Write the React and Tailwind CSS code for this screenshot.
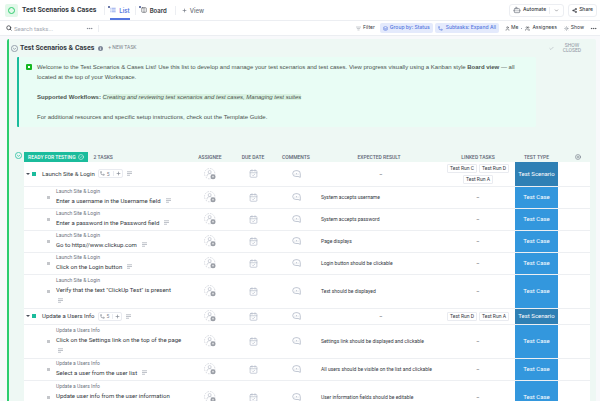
import {
  CalendarCheck,
  Check,
  ChevronDown,
  CircleCheck,
  CirclePlus,
  Columns2,
  Ellipsis,
  ListFilter,
  List,
  Bot,
  Layers,
  Plus,
  Search,
  Share2,
  Sun,
  User,
  Users,
} from "lucide-react";

const scenarios = [
  {
    name: "Launch Site & Login",
    links: ["Test Run C", "Test Run D", "Test Run A"],
    height: "h-6",
    cases: [
      { name: "Enter a username in the Username field", result: "System accepts username" },
      { name: "Enter a password in the Password field", result: "System accepts password" },
      { name: "Go to https//www.clickup.com", result: "Page displays" },
      { name: "Click on the Login button", result: "Login button should be clickable" },
      { name: 'Verify that the text "ClickUp Test" is present', result: "Text should be displayed", tall: true },
    ],
  },
  {
    name: "Update a Users Info",
    links: ["Test Run D", "Test Run A"],
    height: "h-4",
    cases: [
      {
        name: "Click on the Settings link on the top of the page",
        result: "Settings link should be displayed and clickable",
        tall: true,
      },
      { name: "Select a user from the user list", result: "All users should be visible on the list and clickable" },
      {
        name: "Update user info from the user information",
        result: "User information fields should be editable",
        tall: true,
      },
    ],
  },
];

const SubtaskIcon = ({ className }) => (
  <svg viewBox="0 0 12 12" className={className} fill="none" stroke="currentColor" strokeWidth="1.5">
    <circle cx="2.5" cy="2.5" r="1.2" />
    <path d="M2.5 3.7V6a3 3 0 0 0 3 3h2" />
    <circle cx="9" cy="9" r="1.4" />
  </svg>
);

const NoteIcon = () => (
  <svg viewBox="0 0 10 10" className="size-[5px] shrink-0 text-[#a3a9b3]" stroke="currentColor" strokeWidth="1.4">
    <path d="M0 1.5h10M0 5h10M0 8.5h6" />
  </svg>
);

const InfoIcon = () => (
  <svg viewBox="0 0 12 12" className="ml-1 size-[5px]">
    <circle cx="6" cy="6" r="6" fill="#7d8798" />
    <path d="M6 5v4.500M6 2.200v1.600" stroke="#fff" strokeWidth="1.6" />
  </svg>
);

const CommentIcon = () => (
  <svg viewBox="0 0 20 18" className="mx-auto h-2 w-[9px] text-[#b0b8c6]" fill="none" stroke="currentColor" strokeWidth="1.8">
    <path d="M18.500 16.500V8.500A7 6.500 0 0 0 11.500 1.500H8.500A7 6.500 0 0 0 8.500 14.500H13.500z" strokeLinejoin="round" />
    <path d="M6.500 10V8.500M10 10V7M13.500 10V8.500" />
  </svg>
);

const AssigneeIcon = () => (
  <svg viewBox="0 0 36 36" className="mx-auto size-3" fill="none">
    <circle cx="17" cy="17" r="15.500" stroke="#c0c5ce" strokeWidth="1.8" strokeDasharray="5 3" />
    <circle cx="17" cy="12" r="4.500" stroke="#b9bec8" strokeWidth="2" />
    <path d="M9 25c0-5 3-8 8-8s6 1 7 4" stroke="#b9bec8" strokeWidth="2" />
    <circle cx="27" cy="26" r="7.500" fill="#9a9ea6" />
    <path d="M27 23v6M24 26h6" stroke="#fff" strokeWidth="1.5" />
  </svg>
);

const CollapseButton = ({ label, className }) => (
  <button aria-label={label} className={className}>
    <svg viewBox="0 0 14 14" className="size-[7px]" fill="none" stroke="currentColor" strokeWidth="1.5">
      <circle cx="7" cy="7" r="6.200" />
      <path d="M4.300 6 7 8.700 9.700 6" />
    </svg>
  </button>
);

const PinnedMark = () => <span className="absolute -left-[2px] -top-px size-[2px] rounded-full bg-[#3d4f8f]" />;

const RowCells = ({ result, links, scenario }) => (
  <>
    <td>
      <AssigneeIcon />
    </td>
    <td>
      <CalendarCheck className="mx-auto size-[9px] text-[#b0b8c6]" strokeWidth={1.8} />
    </td>
    <td>
      <CommentIcon />
    </td>
    <td className="whitespace-nowrap pl-1 text-[5px] leading-[8px]">
      {result || <p className="text-center">–</p>}
    </td>
    <td className="text-center text-[5px] leading-[8px]">
      {links ? (
        <div className="flex flex-wrap justify-center gap-[2px]">
          {links.map((link) => (
            <a key={link} href="#" className="rounded-[1px] border border-[#e9ebf0] px-[2px] text-[5px] leading-[7px]">
              {link}
            </a>
          ))}
        </div>
      ) : (
        "–"
      )}
    </td>
    <td className={scenario ? "bg-[#2f80b5] text-center text-white" : "bg-[#3397dd] text-center text-white"}>
      {scenario ? "Test Scenario" : "Test Case"}
    </td>
    <td></td>
  </>
);

const ScenarioRow = ({ item }) => (
  <tr className={`${item.height} border-b border-[#edeff2]`}>
    <td>
      <div className="flex items-center whitespace-nowrap pl-[2px]">
        <button aria-label="Collapse" className="h-0 w-0 border-x-2 border-t-2 border-x-transparent border-t-[#4a505a]" />
        <span className="ml-[2px] size-1 bg-[#1bbc9c]" />
        <span className="ml-[6px]">{item.name}</span>
        <span className="ml-[3px] flex h-[9px] items-center gap-[2px] rounded-[2px] border border-[#e9ebf0] px-px text-[5px] text-[#7c828d]">
          <SubtaskIcon className="size-[5px]" />
          5
          <span className="ml-px h-[5px] w-px bg-[#e9ebf0]" />
          <button aria-label="Add subtask">
            <Plus className="size-[5px]" strokeWidth={3} />
          </button>
        </span>
        <span className="ml-1">
          <NoteIcon />
        </span>
      </div>
    </td>
    <RowCells links={item.links} scenario />
  </tr>
);

const CaseRow = ({ item, parent }) => (
  <tr className={item.tall ? "h-[34px] border-b border-[#edeff2]" : "h-[22px] border-b border-[#edeff2]"}>
    <td>
      <div className="flex items-center pl-[23px]">
        <span className="size-[3px] shrink-0 bg-[#c4c6ca]" />
        <div className="ml-[6px]">
          <p className="text-[5px] leading-[7px] text-[#6c727d]">{parent}</p>
          <div className={item.tall ? "leading-[11px]" : "flex items-center gap-[5px] leading-[11px]"}>
            <p>{item.name}</p>
            <div className={item.tall ? "flex h-[11px] items-center pl-[2px]" : "flex"}>
              <NoteIcon />
            </div>
          </div>
        </div>
      </div>
    </td>
    <RowCells result={item.result} />
  </tr>
);

const TopNav = () => (
  <header className="flex h-[21px] shrink-0 items-center border-b border-[#eceef2] pl-[5px] pr-[3px]">
    <span className="flex size-[13px] items-center justify-center rounded-[2px] bg-[#e3f8ea]">
      <span className="size-[7px] rounded-full border border-[#2ecd6f]" />
    </span>
    <h1 className="ml-1 text-[7px] font-bold">Test Scenarios & Cases</h1>
    <nav className="ml-2 flex h-full items-center font-['Inter',sans-serif] text-[6px] font-medium">
      <span className="h-[9px] w-px bg-[#eceef2]" />
      <a href="#" className="ml-[5px] flex h-full items-center gap-[3px] border-b-2 border-[#5577e0] pt-[2px] font-semibold text-[#5577e0]">
        <span className="relative">
          <List className="size-[6px]" strokeWidth={2.5} />
          <PinnedMark />
        </span>
        List
      </a>
      <span className="ml-[5px] h-[9px] w-px bg-[#eceef2]" />
      <a href="#" className="ml-[5px] flex items-center gap-[3px] font-semibold">
        <span className="relative">
          <Columns2 className="size-[6px]" strokeWidth={2} />
          <PinnedMark />
        </span>
        Board
      </a>
      <span className="ml-2 h-[9px] w-px bg-[#eceef2]" />
      <button className="ml-[6px] flex items-center gap-[3px] text-[#6c727d]">
        <Plus className="size-[5px]" strokeWidth={3} />
        View
      </button>
    </nav>
    <div className="ml-auto flex gap-1 font-['Inter',sans-serif] text-[5px] font-medium">
      <div className="flex h-[13px] items-center rounded-[3px] border border-[#eceef2] pl-[3px]">
        <button className="flex items-center gap-[2px]">
          <Bot className="size-[8px] text-[#6c727d]" />
          Automate
        </button>
        <span className="ml-[3px] h-[7px] w-px bg-[#eceef2]" />
        <button aria-label="Automate options" className="px-1">
          <ChevronDown className="size-[5px]" />
        </button>
      </div>
      <button className="flex h-[13px] items-center gap-[2px] rounded-[3px] border border-[#eceef2] px-[3px]">
        <Share2 className="size-[5px]" strokeWidth={3} />
        Share
      </button>
    </div>
  </header>
);

const Toolbar = () => (
  <div className="flex h-[15px] shrink-0 items-center border-b border-[#eceef2] pl-[6px] pr-[3px] font-['Inter',sans-serif] text-[5px]">
    <Search className="size-[6px]" strokeWidth={3} />
    <input
      type="search"
      aria-label="Search tasks"
      placeholder="Search tasks..."
      className="ml-[2px] w-[72px] font-['Roboto',sans-serif] text-[6px] outline-none placeholder:text-[#a3a9b3]"
    />
    <button aria-label="Search options">
      <Ellipsis className="size-[7px] text-[#6c727d]" />
    </button>
    <span className="ml-[5px] h-[7px] w-px bg-[#eceef2]" />
    <div className="ml-auto flex items-center whitespace-nowrap">
      <button className="flex items-center gap-[2px]">
        <ListFilter className="size-[5px] text-[#7c828d]" />
        Filter
      </button>
      <button className="ml-[5px] flex h-[10px] items-center gap-[2px] rounded-[2px] bg-[#e4eafc] px-[3px] font-medium text-[#5577e0]">
        <Layers className="size-[5px]" strokeWidth={2.5} />
        Group by: Status
      </button>
      <button className="ml-[2px] flex h-[10px] items-center gap-[3px] rounded-[2px] bg-[#e4eafc] px-[3px] font-medium text-[#5577e0]">
        <SubtaskIcon className="size-[5px]" />
        Subtasks: Expand All
      </button>
      <button className="ml-[6px] flex items-center gap-px">
        <User className="size-[5px]" />
        Me
      </button>
      <span className="mx-[3px] size-px bg-[#a3a9b3]" />
      <button className="flex items-center gap-[2px]">
        <Users className="size-[5px]" />
        Assignees
      </button>
      <button className="ml-[7px] flex items-center gap-[2px]">
        <Sun className="size-[5px] text-[#7c828d]" />
        Show
      </button>
      <button aria-label="More" className="ml-[6px]">
        <Ellipsis className="size-[7px]" />
      </button>
    </div>
  </div>
);

const ListIntro = () => (
  <>
    <div className="flex h-[18px] items-center pl-[2px] pr-[14px]">
      <CollapseButton label="Collapse list" className="text-[#7d8798]" />
      <h2 className="ml-[2px] text-[7px] font-bold">Test Scenarios & Cases</h2>
      <InfoIcon />
      <button className="ml-[5px] text-[5px] text-[#7c828d]">+ NEW TASK</button>
      <button className="ml-auto flex items-center gap-2 text-[5px] leading-[5px] text-[#8f96a3]">
        <Check className="size-[5px]" />
        <span className="w-5">SHOW CLOSED</span>
      </button>
    </div>
    <section className="ml-2 mr-[60px] flex rounded-[1px] border-l-2 border-[#1bbc9c] bg-[#e9fdf5] py-[5px] pl-[7px] pr-1 font-['Liberation_Sans',sans-serif] text-[6px] leading-[10px] text-[#4c5450]">
      <span className="mt-[2px] flex size-[6px] shrink-0 items-center justify-center rounded-[1px] bg-[#16b822]">
        <span className="size-[2px] bg-white" />
      </span>
      <div className="ml-[5px]">
        <p>
          Welcome to the Test Scenarios & Cases List! Use this list to develop and manage your test scenarios and test
          cases. View progress visually using a Kanban style <strong>Board view</strong> — all located at the top of
          your Workspace.
        </p>
        <p className="mt-[10px]">
          <strong>Supported Workflows: </strong>
          <em className="bg-[#d9f3e2]">Creating and reviewing test scenarios and test cases, Managing test suites</em>
        </p>
        <p className="mt-[10px]">
          For additional resources and specific setup instructions, check out the Template Guide.
        </p>
      </div>
    </section>
  </>
);

const TaskTable = () => (
  <div className="mt-6 flex items-start pr-[6px]">
    <CollapseButton label="Collapse group" className="ml-[6px] mr-[2px] mt-px text-[#1bbc9c]" />
    <table className="w-full table-fixed border-collapse text-[6px] leading-[8px]">
      <colgroup>
        <col />
        <col className="w-[42px]" />
        <col className="w-[44px]" />
        <col className="w-[42px]" />
        <col className="w-[124px]" />
        <col className="w-[74px]" />
        <col className="w-[43px]" />
        <col className="w-[32px]" />
      </colgroup>
      <thead>
        <tr className="h-[11px] whitespace-nowrap text-[5px] text-[#5d6574]">
          <th className="p-0 text-left font-medium">
            <div className="flex items-center gap-[6px]">
              <span className="flex h-[10px] items-center gap-[2px] bg-[#1bbc9c] px-1 text-white">
                READY FOR TESTING
                <CircleCheck className="size-[6px]" />
              </span>
              2 TASKS
            </div>
          </th>
          <th className="font-medium">ASSIGNEE</th>
          <th className="font-medium">DUE DATE</th>
          <th className="font-medium">COMMENTS</th>
          <th className="font-medium">EXPECTED RESULT</th>
          <th className="font-medium">LINKED TASKS</th>
          <th className="font-medium">TEST TYPE</th>
          <th>
            <button aria-label="Add column" className="ml-[17px] flex">
              <CirclePlus className="size-[6px]" />
            </button>
          </th>
        </tr>
      </thead>
      {scenarios.map((scenario) => (
        <tbody key={scenario.name} className="bg-white">
          <ScenarioRow item={scenario} />
          {scenario.cases.map((item) => (
            <CaseRow key={item.name} item={item} parent={scenario.name} />
          ))}
        </tbody>
      ))}
    </table>
  </div>
);

export default function App() {
  return (
    <div className="flex h-screen flex-col overflow-hidden bg-white font-['Roboto',sans-serif] text-[#33373e]">
      <TopNav />
      <Toolbar />
      <main className="min-h-0 flex-1 overflow-hidden bg-[#f8f9fb] pl-[7px] pr-1 pt-[3px]">
        <div className="min-h-full rounded-t-[2px] border-l-2 border-[#2ecd6f] bg-[#eef8f4]">
          <ListIntro />
          <TaskTable />
        </div>
      </main>
    </div>
  );
}
